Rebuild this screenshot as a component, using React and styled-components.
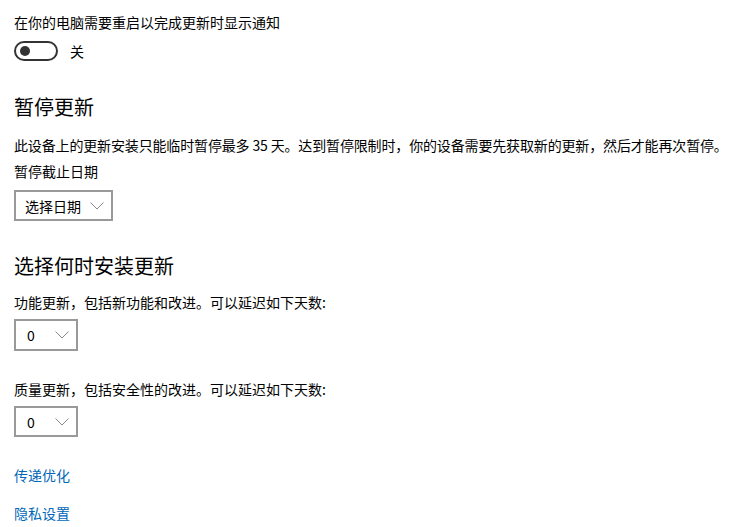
import React from 'react'
import styled, { createGlobalStyle } from 'styled-components'

const GlobalStyle = createGlobalStyle`
  html, body {
    margin: 0;
    padding: 0;
    background: #ffffff;
  }
  body {
    font-family: "Noto Sans CJK SC", "Noto Sans", sans-serif;
    color: #000000;
    -webkit-font-smoothing: antialiased;
  }
`

const Page = styled.div`
  padding: 12px 0 0 14px;
  display: flex;
  flex-direction: column;
  align-items: flex-start;
`

const Text = styled.div`
  font-size: 14px;
  line-height: 20px;
  margin-top: ${p => p.$top || 0}px;
  letter-spacing: ${p => p.$tight ? '-0.15px' : 'normal'};
  white-space: nowrap;
`

const Heading = styled.h2`
  font-size: 20px;
  line-height: 28px;
  font-weight: 400;
  margin: ${p => p.$top || 0}px 0 0;
`

const ToggleRow = styled.div`
  display: flex;
  align-items: center;
  gap: 12px;
  margin-top: 9px;
  font-size: 14px;
`

const Track = styled.div`
  box-sizing: border-box;
  width: 44px;
  height: 20px;
  border: 2px solid #333333;
  border-radius: 10px;
  display: flex;
  align-items: center;
  padding-left: 4px;
`

const Knob = styled.div`
  width: 10px;
  height: 10px;
  border-radius: 50%;
  background: #333333;
`

const Select = styled.div`
  box-sizing: border-box;
  height: ${p => p.$h || 31}px;
  min-width: ${p => p.$w}px;
  border: 2px solid #999999;
  margin-top: ${p => p.$top || 0}px;
  display: flex;
  align-items: center;
  justify-content: space-between;
  padding: 0 7px 0 ${p => p.$pl || 8}px;
  font-size: 14px;
`

const Link = styled.a`
  font-size: 14px;
  line-height: 20px;
  color: #0067b8;
  text-decoration: none;
  margin-top: ${p => p.$top || 0}px;
`

const Chevron = () => (
  <svg width="14" height="8" viewBox="0 0 14 8">
    <polyline points="0.5,0.5 7,7 13.5,0.5" fill="none" stroke="#8a8a8a" strokeWidth="1" />
  </svg>
)

export default function App() {
  return (
    <>
      <GlobalStyle />
      <Page>
        <Text>在你的电脑需要重启以完成更新时显示通知</Text>
        <ToggleRow>
          <Track><Knob /></Track>
          <span>关</span>
        </ToggleRow>

        <Heading $top={32}>暂停更新</Heading>
        <Text $top={14} $tight>此设备上的更新安装只能临时暂停最多 35 天。达到暂停限制时，你的设备需要先获取新的更新，然后才能再次暂停。</Text>
        <Text $top={6}>暂停截止日期</Text>
        <Select $w={99} $top={9} $pl={9}>
          <span>选择日期</span>
          <Chevron />
        </Select>

        <Heading $top={31}>选择何时安装更新</Heading>
        <Text $top={12}>功能更新，包括新功能和改进。可以延迟如下天数:</Text>
        <Select $w={64} $h={32} $top={7} $pl={11}>
          <span>0</span>
          <Chevron />
        </Select>

        <Text $top={28}>质量更新，包括安全性的改进。可以延迟如下天数:</Text>
        <Select $w={64} $h={31} $top={7} $pl={11}>
          <span>0</span>
          <Chevron />
        </Select>

        <Link href="#" $top={28}>传递优化</Link>
        <Link href="#" $top={18}>隐私设置</Link>
      </Page>
    </>
  )
}
